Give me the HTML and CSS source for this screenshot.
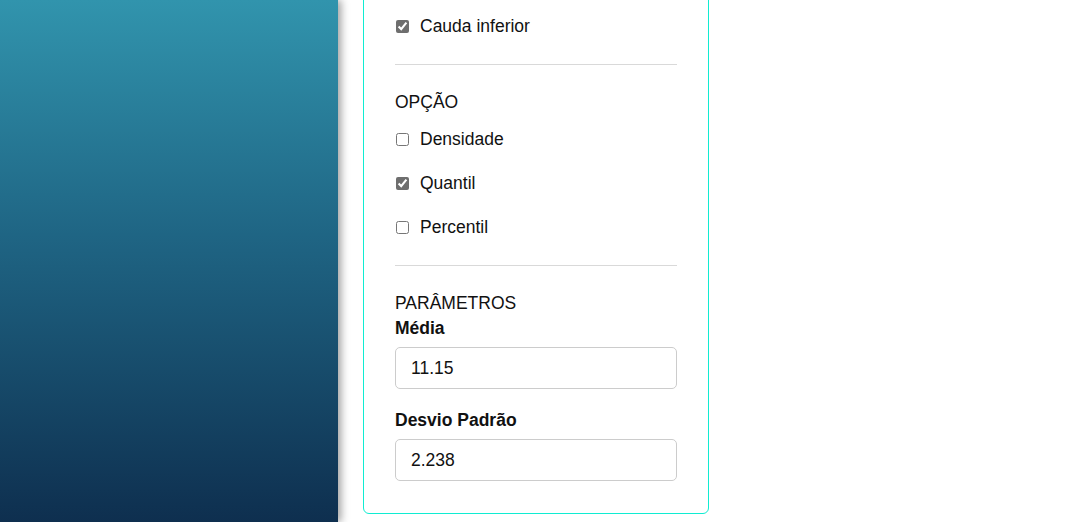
FILE: index.html
```html
<!DOCTYPE html>
<html lang="pt">
<head>
<meta charset="utf-8">
<title>Distribuição Normal</title>
<link rel="stylesheet" href="styles.css">
</head>
<body>
<div class="layout">
  <aside class="sidebar"></aside>
  <main class="main">
    <section class="card">
      <label class="check-row"><input type="checkbox" checked> <span>Cauda inferior</span></label>
      <hr class="divider">
      <div class="section-title">OPÇÃO</div>
      <div class="options">
        <label class="check-row"><input type="checkbox"> <span>Densidade</span></label>
        <label class="check-row"><input type="checkbox" checked> <span>Quantil</span></label>
        <label class="check-row"><input type="checkbox"> <span>Percentil</span></label>
      </div>
      <hr class="divider">
      <div class="section-title">PARÂMETROS</div>
      <div class="field first">
        <label class="field-label" for="media">Média</label>
        <input class="field-input" id="media" type="text" value="11.15">
      </div>
      <div class="field">
        <label class="field-label" for="desvio">Desvio Padrão</label>
        <input class="field-input" id="desvio" type="text" value="2.238">
      </div>
    </section>
  </main>
</div>
</body>
</html>
```

FILE: styles.css
```css
* { box-sizing: border-box; }
html, body {
  margin: 0;
  height: 100%;
  overflow: hidden;
  background: #ffffff;
  font-family: "Liberation Sans", Arial, sans-serif;
  font-size: 17.5px;
  line-height: 20px;
  color: #111;
}
.layout {
  display: flex;
  height: 522px;
}
.sidebar {
  width: 338px;
  flex: 0 0 338px;
  height: 100%;
  background: linear-gradient(to bottom, #3194ad 0%, #1f6584 45%, #0e2f4f 100%);
  box-shadow: 3px 0 8px rgba(0, 0, 0, 0.38);
  position: relative;
  z-index: 1;
}
.main {
  flex: 1;
  padding-left: 25px;
}
.card {
  width: 346px;
  margin-top: -16px;
  border: 1px solid #10ecd2;
  border-radius: 6px;
  padding: 31px 31px 32px;
  background: #fff;
}
.check-row {
  display: flex;
  align-items: center;
  gap: 11px;
  height: 20px;
}
.check-row input {
  margin: 0 0 0 1px;
  width: 13px;
  height: 13px;
  accent-color: #6e6e6e;
  flex: 0 0 13px;
}
.divider {
  border: 0;
  border-top: 1px solid #d9d9d9;
  height: 0;
  margin: 28px 0 27px;
}
.section-title {
  font-weight: normal;
}
.options {
  display: flex;
  flex-direction: column;
  gap: 24px;
  margin-top: 17px;
}
.field {
  display: flex;
  flex-direction: column;
  margin-top: 21px;
}
.field.first {
  margin-top: 5px;
}
.field-label {
  font-weight: bold;
}
.field-input {
  margin-top: 9px;
  height: 42px;
  width: 100%;
  border: 1px solid #cccccc;
  border-radius: 5px;
  padding: 0 15px;
  font-family: "Liberation Sans", Arial, sans-serif;
  font-size: 17.5px;
  color: #111;
  background: #fff;
  outline: none;
}
```
